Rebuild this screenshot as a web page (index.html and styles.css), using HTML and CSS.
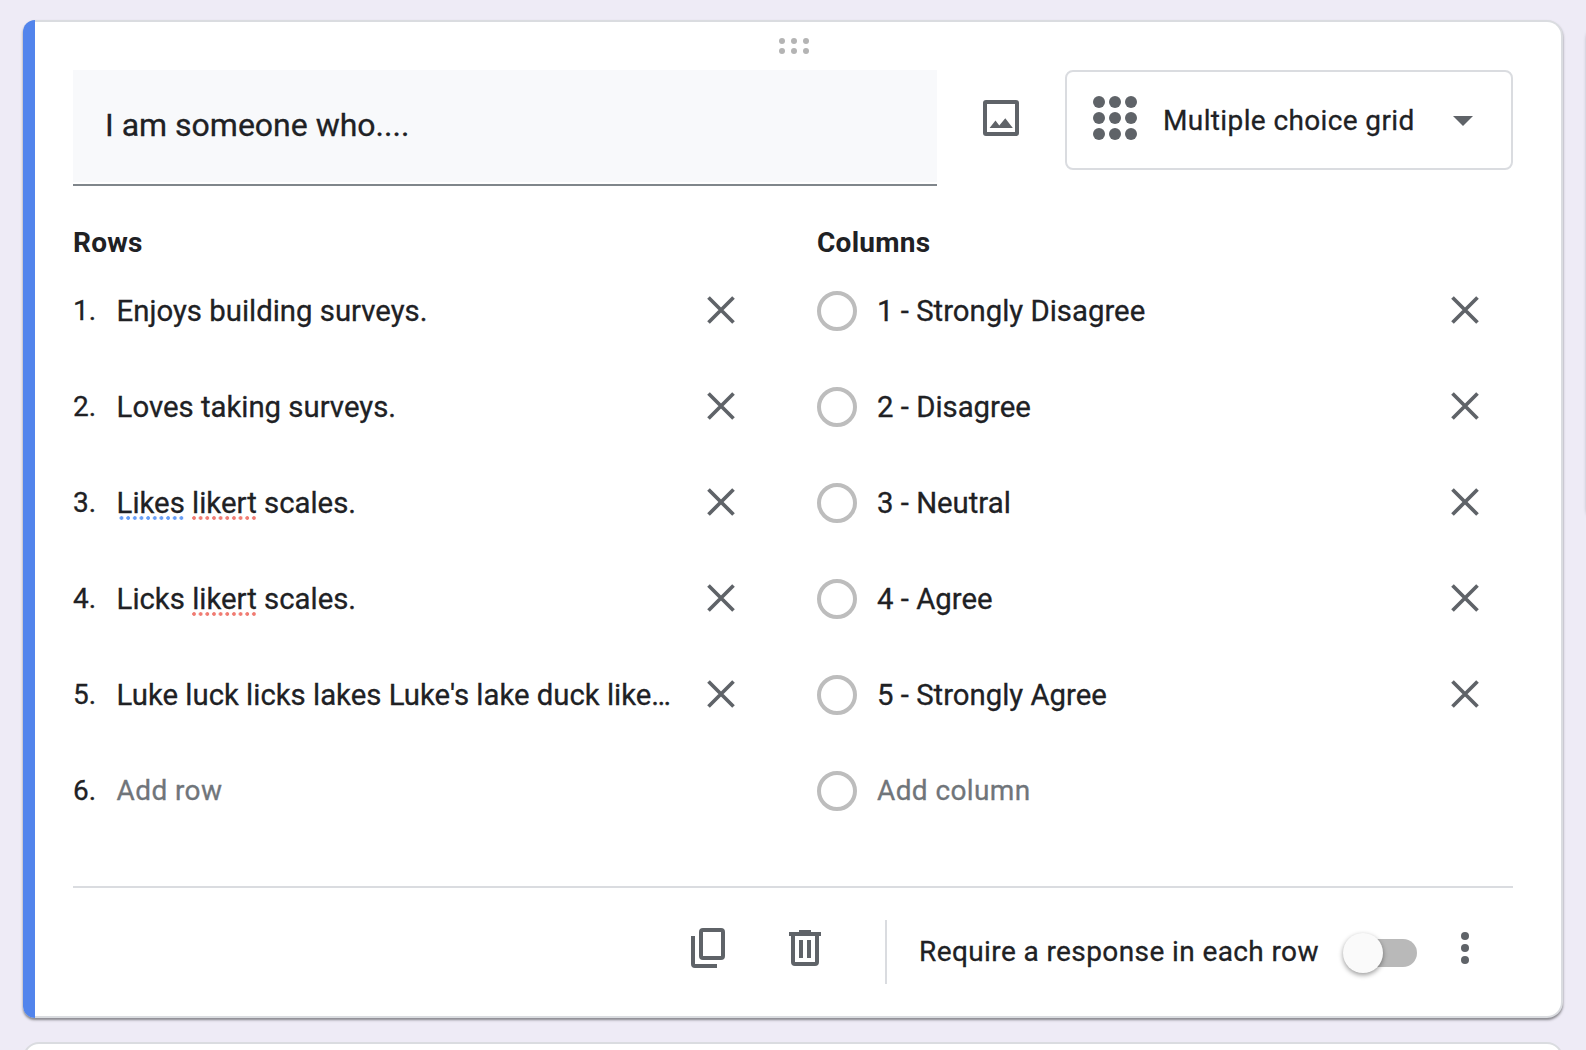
FILE: index.html
```html
<!DOCTYPE html>
<html lang="en">
<head>
<meta charset="utf-8">
<title>Form editor</title>
<link rel="stylesheet" href="styles.css">
</head>
<body>
<svg class="defs" aria-hidden="true">
  <symbol id="close" viewBox="0 0 28 28"><path d="M1.5 1.5l25 25M26.5 1.5l-25 25" stroke="currentColor" stroke-width="3.7" fill="none"/></symbol>
</svg>
<main class="page">
  <section class="card question">
    <div class="grip">
      <svg width="30" height="16" viewBox="0 0 30 16" fill="currentColor"><circle cx="3" cy="3" r="3"/><circle cx="15" cy="3" r="3"/><circle cx="27" cy="3" r="3"/><circle cx="3" cy="13" r="3"/><circle cx="15" cy="13" r="3"/><circle cx="27" cy="13" r="3"/></svg>
    </div>
    <header class="head">
      <div class="title-field"><div class="title">I am someone who....</div></div>
      <svg class="image-icon" width="48" height="48" viewBox="0 0 24 24" fill="currentColor"><path fill-rule="evenodd" d="M4.500 3h15A1.500 1.500 0 0 1 21 4.500v15a1.500 1.500 0 0 1-1.500 1.500h-15A1.500 1.500 0 0 1 3 19.500v-15A1.500 1.500 0 0 1 4.500 3zM5 5v14h14V5z"/><path d="M14.140 12.100l-3 3.700-1.900-2.500L6.300 17h11.600z"/></svg>
      <div class="type-select">
        <svg width="44" height="44" viewBox="0 0 44 44" fill="currentColor"><circle cx="6" cy="6" r="6"/><circle cx="22" cy="6" r="6"/><circle cx="38" cy="6" r="6"/><circle cx="6" cy="22" r="6"/><circle cx="22" cy="22" r="6"/><circle cx="38" cy="22" r="6"/><circle cx="6" cy="38" r="6"/><circle cx="22" cy="38" r="6"/><circle cx="38" cy="38" r="6"/></svg>
        <span class="type-label">Multiple choice grid</span>
        <svg class="caret" width="20" height="10" viewBox="0 0 20 10" fill="currentColor"><path d="M0 0h20L10 10z"/></svg>
      </div>
    </header>
    <div class="grid">
      <div class="list rows">
        <h2>Rows</h2>
        <div class="item"><span class="num">1.</span><span class="text">Enjoys building surveys.</span><svg class="x"><use href="#close"/></svg></div>
        <div class="item"><span class="num">2.</span><span class="text">Loves taking surveys.</span><svg class="x"><use href="#close"/></svg></div>
        <div class="item"><span class="num">3.</span><span class="text"><span class="mark grammar">Likes</span> <span class="mark spelling">likert</span> scales.</span><svg class="x"><use href="#close"/></svg></div>
        <div class="item"><span class="num">4.</span><span class="text">Licks <span class="mark spelling">likert</span> scales.</span><svg class="x"><use href="#close"/></svg></div>
        <div class="item"><span class="num">5.</span><span class="text">Luke luck licks lakes Luke's lake duck like…</span><svg class="x"><use href="#close"/></svg></div>
        <div class="item"><span class="num">6.</span><span class="text hint">Add row</span></div>
      </div>
      <div class="list columns">
        <h2>Columns</h2>
        <div class="item"><span class="radio"></span><span class="text">1 - Strongly Disagree</span><svg class="x"><use href="#close"/></svg></div>
        <div class="item"><span class="radio"></span><span class="text">2 - Disagree</span><svg class="x"><use href="#close"/></svg></div>
        <div class="item"><span class="radio"></span><span class="text">3 - Neutral</span><svg class="x"><use href="#close"/></svg></div>
        <div class="item"><span class="radio"></span><span class="text">4 - Agree</span><svg class="x"><use href="#close"/></svg></div>
        <div class="item"><span class="radio"></span><span class="text">5 - Strongly Agree</span><svg class="x"><use href="#close"/></svg></div>
        <div class="item"><span class="radio"></span><span class="text hint">Add column</span></div>
      </div>
    </div>
    <footer class="foot">
      <svg class="copy" width="34" height="40" viewBox="0 0 34 40" fill="none" stroke="currentColor" stroke-width="4"><rect x="10" y="2" width="22" height="28" rx="2"/><path d="M2 8v28q0 2 2 2H26"/></svg>
      <svg class="trash" width="32" height="36" viewBox="0 0 32 36" fill="none" stroke="currentColor" stroke-width="4"><path d="M0 4h32M10 2h12M4 4v28q0 2 2 2h20q2 0 2-2V4M12 10v18M20 10v18"/></svg>
      <span class="rule"></span>
      <span class="require">Require a response in each row</span>
      <span class="toggle"><span class="knob"></span></span>
      <svg class="more" width="8" height="32" viewBox="0 0 8 32" fill="currentColor"><circle cx="4" cy="4" r="4"/><circle cx="4" cy="16" r="4"/><circle cx="4" cy="28" r="4"/></svg>
    </footer>
  </section>
  <section class="card next"></section>
  <aside class="toolbar"></aside>
</main>
</body>
</html>
```

FILE: styles.css
```css
* { box-sizing: border-box; }
body {
  margin: 0;
  height: 1050px;
  overflow: hidden;
  background: #eeebf6;
  color: #202124;
  font: 28px/40px Roboto, sans-serif;
  -webkit-text-stroke: .3px;
}
svg { display: block; flex: none; color: #5f6368; }
.defs { width: 0; height: 0; position: absolute; }
.page {
  position: relative;
  height: 1050px;
  padding: 20px 23px 0;
  display: flex;
  flex-direction: column;
  gap: 24px;
  overflow: hidden;
}
.card {
  flex: none;
  background: #fff;
  border: 2px solid #dadce0;
  border-radius: 16px;
}
.question {
  position: relative;
  height: 998px;
  padding: 0 48px 0 50px;
  border-left: 0;
  border-radius: 12px 16px 16px 12px;
  box-shadow: 0 2px 2px rgba(0, 0, 0, .25), 0 2px 3px rgba(60, 64, 67, .3);
}
/* accent bar over the card's left edge */
.question::before {
  content: "";
  position: absolute;
  left: 0;
  top: -2px;
  bottom: -2px;
  width: 12px;
  border-radius: 12px 0 0 12px;
  background: #5284ec;
}
.next { height: 60px; }
/* floating toolbar, only its edge shadow reaches the view */
.toolbar {
  position: absolute;
  left: 1586px;
  top: 22px;
  width: 96px;
  height: 500px;
  border-radius: 16px;
  background: #fff;
  box-shadow: 0 2px 3px rgba(60, 64, 67, .3);
}
.grip { height: 48px; padding: 16px 0 0 2px; display: flex; justify-content: center; }
.grip svg { color: #b4b4b4; }
.head { display: flex; height: 116px; }
.title-field {
  width: 864px;
  height: 116px;
  display: flex;
  flex-direction: column;
  border-bottom: 2px solid #80868b;
}
.title { height: 112px; padding: 35px 32px 0; background: #f8f9fb; font-size: 32px; }
.image-icon { margin: 24px 40px 0; }
.type-select {
  width: 448px;
  height: 100px;
  padding-left: 26px;
  display: flex;
  align-items: center;
  border: 2px solid #dadce0;
  border-radius: 8px;
}
.type-select svg:first-child { margin-bottom: 4px; }
.type-label { width: 290px; margin-left: 26px; padding-top: 2px; letter-spacing: .38px; }
.caret { margin-top: 2px; }
.grid { display: grid; grid-template-columns: 744px 696px; height: 700px; padding-top: 37px; }
h2 { margin: 0 0 8px; height: 40px; font-size: 28px; line-height: 40px; font-weight: 700; letter-spacing: .25px; -webkit-text-stroke: 0; }
.item { display: flex; align-items: center; height: 80px; margin-bottom: 16px; }
.num { width: 43.6px; }
.text { flex: 1; white-space: nowrap; font-size: 29.33px; }
.hint { color: #70757a; font-size: 28px; letter-spacing: .4px; }
.x { width: 28px; height: 28px; margin: -2px 34px 0 0; }
.rows .x { margin-right: 82px; }
.radio { width: 40px; height: 40px; margin-right: 20px; border: 4px solid #bdbdbd; border-radius: 50%; }
.mark { background: repeat-x 2.500px 100% / 6.670px 4px; }
.spelling { background-position-x: 0; }
.grammar { background-image: radial-gradient(circle at 2px 2px, #669df6 1.500px, transparent 2.200px); }
.spelling { background-image: radial-gradient(circle at 2px 2px, #f07b72 1.500px, transparent 2.200px); }
.foot { display: flex; height: 130px; padding-left: 618px; border-top: 2px solid #dadce0; }
.copy { margin-top: 40px; }
.trash { margin: 42px 64px 0; }
.rule { width: 2px; height: 64px; margin-top: 32px; background: #dadce0; }
.require { width: 426px; margin: 44px 0 0 32px; letter-spacing: .4px; white-space: nowrap; }
.toggle { flex: none; display: flex; align-items: center; width: 72px; height: 28px; margin-top: 51px; border-radius: 14px; background: #b9b9b9; }
.knob { flex: none; width: 40px; height: 40px; margin-left: -2px; border-radius: 50%; background: #fafafa; box-shadow: 0 2px 5px rgba(0, 0, 0, .4); }
.more { margin: 44px 0 0 44px; }
```
